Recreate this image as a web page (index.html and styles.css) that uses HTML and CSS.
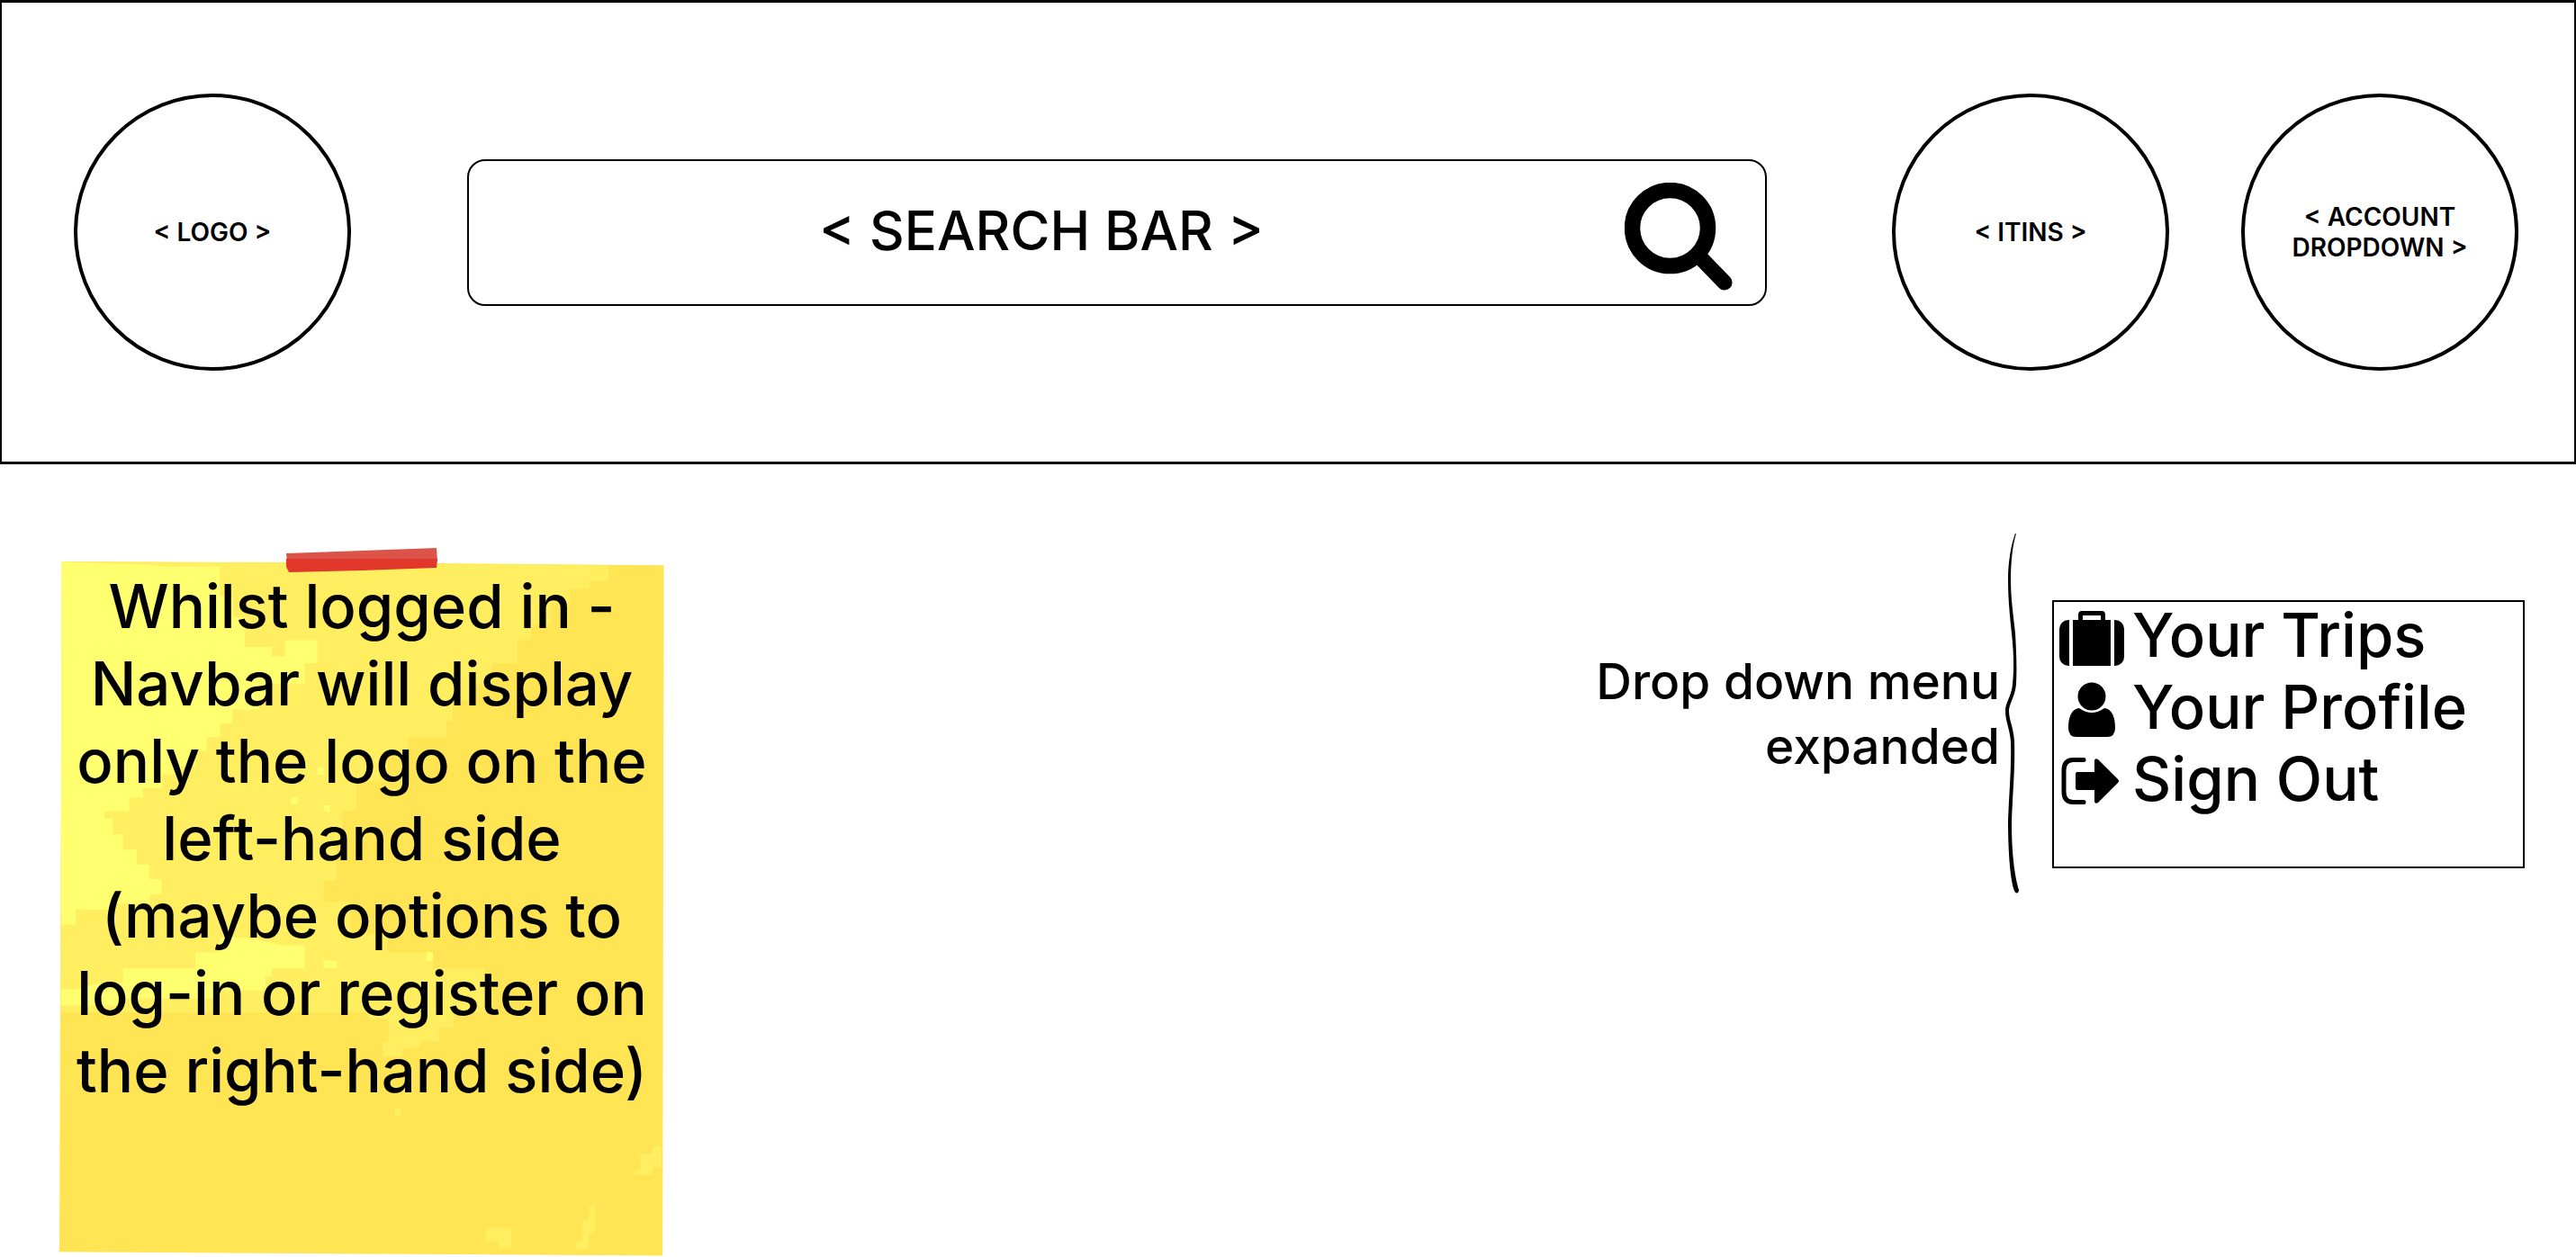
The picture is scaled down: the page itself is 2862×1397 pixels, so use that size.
FILE: index.html
```
<!DOCTYPE html>
<html lang="en">
<head>
<meta charset="utf-8">
<meta name="viewport" content="width=device-width, initial-scale=1">
<title>Navbar wireframe</title>
<link rel="stylesheet" href="styles.css">
</head>
<body>
<header class="navbar">
  <a class="circle" href="#">&lt; LOGO &gt;</a>
  <form class="search" role="search">
    <input class="search-input" type="text" aria-label="Search" placeholder="&lt; SEARCH BAR &gt;">
    <button class="search-button" type="button" aria-label="Search">
      <svg class="search-icon" viewBox="0 0 120 120" aria-hidden="true">
        <path d="M82 81 L111 111" fill="none" stroke="#000" stroke-width="17" stroke-linecap="round"/>
        <circle cx="50.5" cy="50.5" r="42" fill="none" stroke="#000" stroke-width="17.5"/>
      </svg>
    </button>
  </form>
  <nav class="actions" aria-label="Account">
    <a class="circle" href="#">&lt; ITINS &gt;</a>
    <button class="circle" type="button">&lt; ACCOUNT DROPDOWN &gt;</button>
  </nav>
</header>

<main class="board">
  <aside class="note">
    <svg class="note-paper" viewBox="56 63 1464 1504" preserveAspectRatio="none" aria-hidden="true">
      <path fill="#ffe453" d="M62 65 L800 68 L1519 73 L1516 1566 L800 1562 L56 1558 Z"/>
      <path fill="#ffee60" d="M62 65 L1385 73 V108 H1340 V124 H1292 V155 H1245 V202 H1198 V235 H1165 V285 H1102 V330 H1055 V365 H1008 V412 H992 V445 H900 V480 H850 V540 H775 V605 H740 V670 H727 V755 H696 V800 H760 V870 H850 V910 H960 V945 H1085 V1008 H1100 V1040 H1010 V1072 H975 V1102 H930 V1118 H885 V1135 H838 V1105 H852 V1055 H805 V1040 H59 Z"/>
      <path fill="#ffff70" d="M62 66 L275 72 L300 76 H444 V140 H475 V185 H505 V250 H570 V270 H603 V235 H680 V285 H650 V330 H570 V365 H540 V385 H475 V415 H445 V445 H412 V475 H385 V508 H350 V525 H304 V555 H258 V575 H225 V605 H165 V620 H185 V655 H210 V688 H243 V720 H273 V752 H303 V785 H275 V805 H190 V818 H95 V850 H60 Z"/>
      <path fill="#ffff70" d="M60 1025 V990 H95 L160 975 H210 V945 H385 V910 H445 V878 H510 L600 895 H650 V945 H570 V962 H555 V992 H430 V1010 H210 V1025 Z"/>
      <path fill="#ffff70" d="M695 928 H727 V944 H695 Z M945 910 H960 V928 H945 Z M680 510 H695 V526 H680 Z M696 592 H711 V606 H696 Z M616 575 H632 V590 H616 Z"/>
      <path fill="#ffee60" d="M695 398 H727 V430 H695 Z M1448 1380 H1462 V1345 H1492 V1330 H1513 V1375 H1492 V1392 H1448 Z M1087 1506 H1150 V1550 H1118 V1535 H1087 Z M1322 1490 H1338 V1456 H1352 V1520 H1338 V1553 H1306 V1535 H1322 Z M868 1248 H882 V1264 H868 Z"/>
    </svg>
    <svg class="note-tape" viewBox="0 0 168 28" aria-hidden="true">
      <path fill="#db5349" d="M0 6 L84 3 L167 0 L168 15 L1 15 Z"/>
      <path fill="#e2382b" d="M0 12 L168 12 L167 22 L84 25 L3 27 L0 21 Z"/>
    </svg>
    <p class="note-text">Whilst logged in - Navbar will display only the logo on the left-hand side (maybe options to log-in or register on the right-hand side)</p>
  </aside>

  <section class="dropdown">
    <p class="caption">Drop down menu expanded</p>
    <svg class="brace" viewBox="0 0 20 402" aria-hidden="true">
      <path d="M15 1 C10 14 7 34 7 52 C7 74 9 92 11 112 C13 130 14 150 12 168 C11 182 4 188 4 198 C4 210 9 218 10 232 C11 262 8 290 7 320 C7 350 9 385 14 398 C16 402 19 401 19 397 C15 384 11 360 11 322 C12 290 15 262 14 232 C13 216 8 208 8 198 C8 190 15 182 16 168 C17 148 16 130 15 112 C13 92 10 74 10 52 C10 32 12 14 16 1 Z"/>
    </svg>
    <ul class="menu">
      <li>
        <a class="menu-item" href="#">
          <svg class="menu-icon" viewBox="0 0 80 72" aria-hidden="true">
            <path d="M15 19 V70 H14 A10 10 0 0 1 4 60 V29 A10 10 0 0 1 14 19 Z M65 19 H66 A10 10 0 0 1 76 29 V60 A10 10 0 0 1 66 70 H65 Z"/>
            <path fill-rule="evenodd" d="M19 19 H25 V13 Q25 9 29 9 H51 Q55 9 55 13 V19 H61 V70 H19 Z M30 14 H50 V19 H30 Z"/>
          </svg>
          Your Trips
        </a>
      </li>
      <li>
        <a class="menu-item" href="#">
          <svg class="menu-icon" viewBox="0 0 80 72" aria-hidden="true">
            <circle cx="40" cy="24" r="15.5"/>
            <path d="M26 37 Q40 47 54 37 C63 38 66 48 66 59 Q66 69 57 69 H23 Q14 69 14 59 C14 48 17 38 26 37 Z"/>
          </svg>
          Your Profile
        </a>
      </li>
      <li>
        <a class="menu-item" href="#">
          <svg class="menu-icon" viewBox="0 0 80 72" aria-hidden="true">
            <path d="M31 14.5 H19 Q9 15 9 26 V50 Q9 61 19 61.5 H31" fill="none" stroke="#000" stroke-width="5" stroke-linecap="round"/>
            <path d="M24 28 H43 V15 Q44 12 47 14 L69 36 Q71 38 69 40 L47 62 Q44 64 43 61 V48 H24 Q22 48 22 46 V30 Q22 28 24 28 Z"/>
          </svg>
          Sign Out
        </a>
      </li>
    </ul>
  </section>
</main>
</body>
</html>
```
FILE: styles.css
```
* {
  box-sizing: border-box;
}

body {
  margin: 0;
  background: #fff;
  color: #000;
  font-family: Inter, "Noto Sans", sans-serif;
  font-weight: 500;
}

a {
  color: inherit;
  text-decoration: none;
}

.navbar {
  display: flex;
  align-items: center;
  padding: 101px 62px 101px 80px;
  border: 3px solid #000;
  border-width: 3px 2px;
}

.circle {
  display: flex;
  flex: none;
  align-items: center;
  justify-content: center;
  width: 308px;
  height: 308px;
  padding: 0 48px;
  border: 4px solid #000;
  border-radius: 50%;
  background: none;
  color: inherit;
  font: inherit;
  font-size: 28px;
  font-weight: 600;
  line-height: 34px;
  text-align: center;
}

.search {
  display: flex;
  flex: 1;
  min-width: 0;
  height: 163px;
  margin: 0 139px 0 129px;
  border: 2px solid #000;
  border-radius: 20px;
}

.search-input {
  flex: 1;
  min-width: 0;
  padding: 0 0 4px;
  border: 0;
  background: none;
  color: inherit;
  font: inherit;
  font-size: 60px;
  text-align: center;
}

.search-input::placeholder {
  color: inherit;
  opacity: 1;
}

.search-button {
  display: flex;
  align-items: center;
  padding: 10px 36px 0 12px;
  border: 0;
  background: none;
}

.search-icon {
  width: 120px;
  height: 120px;
}

.actions {
  display: flex;
  gap: 80px;
}

.board {
  display: flex;
  align-items: flex-start;
  justify-content: space-between;
  padding: 0 57px 0 66px;
}

.note {
  position: relative;
  width: 672px;
  min-height: 773px;
  margin-top: 107px;
  padding: 8px 16px;
}

.note-paper {
  position: absolute;
  inset: 0;
  width: 100%;
  height: 100%;
}

.note-tape {
  position: absolute;
  top: -14px;
  left: 252px;
  width: 168px;
  height: 28px;
}

.note-text {
  position: relative;
  margin: 0;
  font-size: 67px;
  line-height: 86px;
  text-align: center;
}

.dropdown {
  display: flex;
  align-items: center;
  margin-top: 76px;
}

.caption {
  width: 460px;
  margin: 0 2px 0 0;
  font-size: 55px;
  line-height: 72px;
  text-align: right;
}

.brace {
  width: 20px;
  height: 402px;
  margin-right: 36px;
}

.menu {
  display: flex;
  flex-direction: column;
  align-self: flex-start;
  gap: 8px;
  width: 525px;
  min-height: 298px;
  margin: 75px 0 0;
  padding: 1px 2px 57px;
  border: 2px solid #000;
  list-style: none;
}

.menu-item {
  display: flex;
  gap: 5px;
  font-size: 67px;
  line-height: 72px;
}

.menu-icon {
  width: 80px;
  height: 72px;
}
```
